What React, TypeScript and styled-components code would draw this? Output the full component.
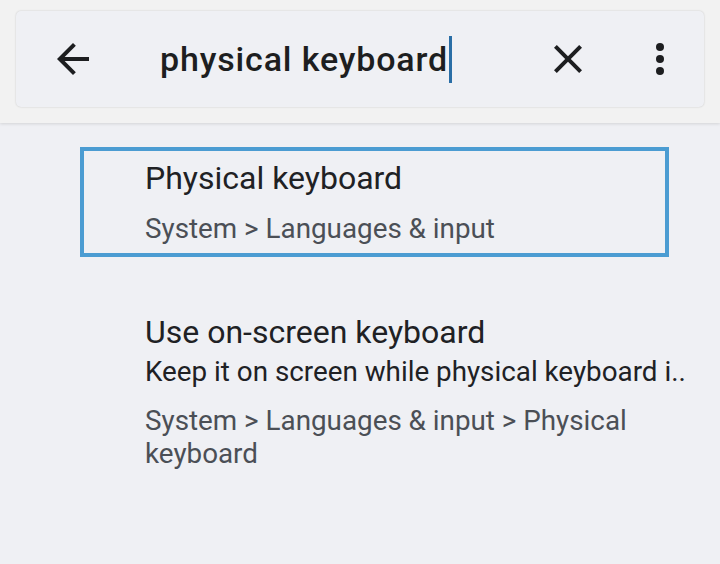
import styled, { createGlobalStyle } from "styled-components";

const GlobalStyle = createGlobalStyle`
  html, body {
    margin: 0;
    padding: 0;
    background: #eff0f4;
    font-family: Roboto, "Noto Sans", sans-serif;
  }
`;

const Page = styled.div`
  width: 720px;
  height: 564px;
  background: #eff0f4;
  overflow: hidden;
`;

const Header = styled.header`
  background: #f2f2f2;
  padding: 11px 16px 16px;
  box-shadow: 0 1px 3px rgba(0, 0, 0, 0.12);
  position: relative;
`;

const SearchCard = styled.div`
  height: 96px;
  display: flex;
  align-items: center;
  background: #eff0f4;
  border-radius: 5px;
  box-shadow: 0 0 2px rgba(0, 0, 0, 0.18);
`;

const IconButton = styled.button<{ ml?: string }>`
  width: 48px;
  height: 48px;
  margin-left: ${({ ml }) => ml || "0"};
  padding: 0;
  border: 0;
  background: none;
  display: flex;
  align-items: center;
  justify-content: center;
  color: #1d1e20;
`;

const Query = styled.div`
  flex: 1;
  margin-left: 63px;
  display: flex;
  align-items: center;
  font-size: 34px;
  font-weight: 500;
  color: #1d1e20;
  letter-spacing: 0.85px;
  white-space: nowrap;
`;

const Caret = styled.span`
  width: 3px;
  height: 47px;
  background: #2a6ea6;
  margin-left: 1px;
`;

const List = styled.div`
  padding: 24px 0 0 80px;
  display: flex;
  flex-direction: column;
`;

const Result = styled.div<{ focused?: boolean }>`
  width: 589px;
  box-sizing: border-box;
  padding: ${({ focused }) => (focused ? "8px 0 8px 61px" : "56px 0 0 65px")};
  border: ${({ focused }) => (focused ? "4px solid #4b9cd2" : "0")};
  display: flex;
  flex-direction: column;
`;

const Title = styled.div`
  font-size: 32px;
  line-height: 38px;
  color: #202124;
`;

const Summary = styled.div`
  margin-top: 3px;
  font-size: 27.8px;
  line-height: 36px;
  color: #202124;
  white-space: nowrap;
`;

const Breadcrumb = styled.div<{ gap?: string }>`
  margin-top: ${({ gap }) => gap || "0"};
  font-size: 27.8px;
  line-height: 33px;
  color: #4b4f56;
  width: 510px;
`;

const BackIcon = () => (
  <svg width="48" height="48" viewBox="0 0 24 24">
    <path
      d="M20 11H7.83l5.59-5.59L12 4l-8 8 8 8 1.41-1.41L7.83 13H20v-2z"
      fill="currentColor"
    />
  </svg>
);

const CloseIcon = () => (
  <svg width="48" height="48" viewBox="0 0 24 24">
    <path
      d="M19 6.41 17.59 5 12 10.59 6.41 5 5 6.41 10.59 12 5 17.59 6.41 19 12 13.41 17.59 19 19 17.59 13.41 12z"
      fill="currentColor"
    />
  </svg>
);

const MoreIcon = () => (
  <svg width="48" height="48" viewBox="0 0 24 24">
    <circle cx="12" cy="6" r="2" fill="currentColor" />
    <circle cx="12" cy="12" r="2" fill="currentColor" />
    <circle cx="12" cy="18" r="2" fill="currentColor" />
  </svg>
);

export default function App() {
  return (
    <Page>
      <GlobalStyle />
      <Header>
        <SearchCard>
          <IconButton ml="33px">
            <BackIcon />
          </IconButton>
          <Query>
            physical keyboard
            <Caret />
          </Query>
          <IconButton>
            <CloseIcon />
          </IconButton>
          <IconButton ml="44px">
            <MoreIcon />
          </IconButton>
          <div style={{ width: "20px" }} />
        </SearchCard>
      </Header>
      <List>
        <Result focused>
          <Title>Physical keyboard</Title>
          <Breadcrumb gap="15px">System &gt; Languages &amp; input</Breadcrumb>
        </Result>
        <Result>
          <Title>Use on-screen keyboard</Title>
          <Summary>Keep it on screen while physical keyboard i..</Summary>
          <Breadcrumb gap="14px">
            System &gt; Languages &amp; input &gt; Physical keyboard
          </Breadcrumb>
        </Result>
      </List>
    </Page>
  );
}
